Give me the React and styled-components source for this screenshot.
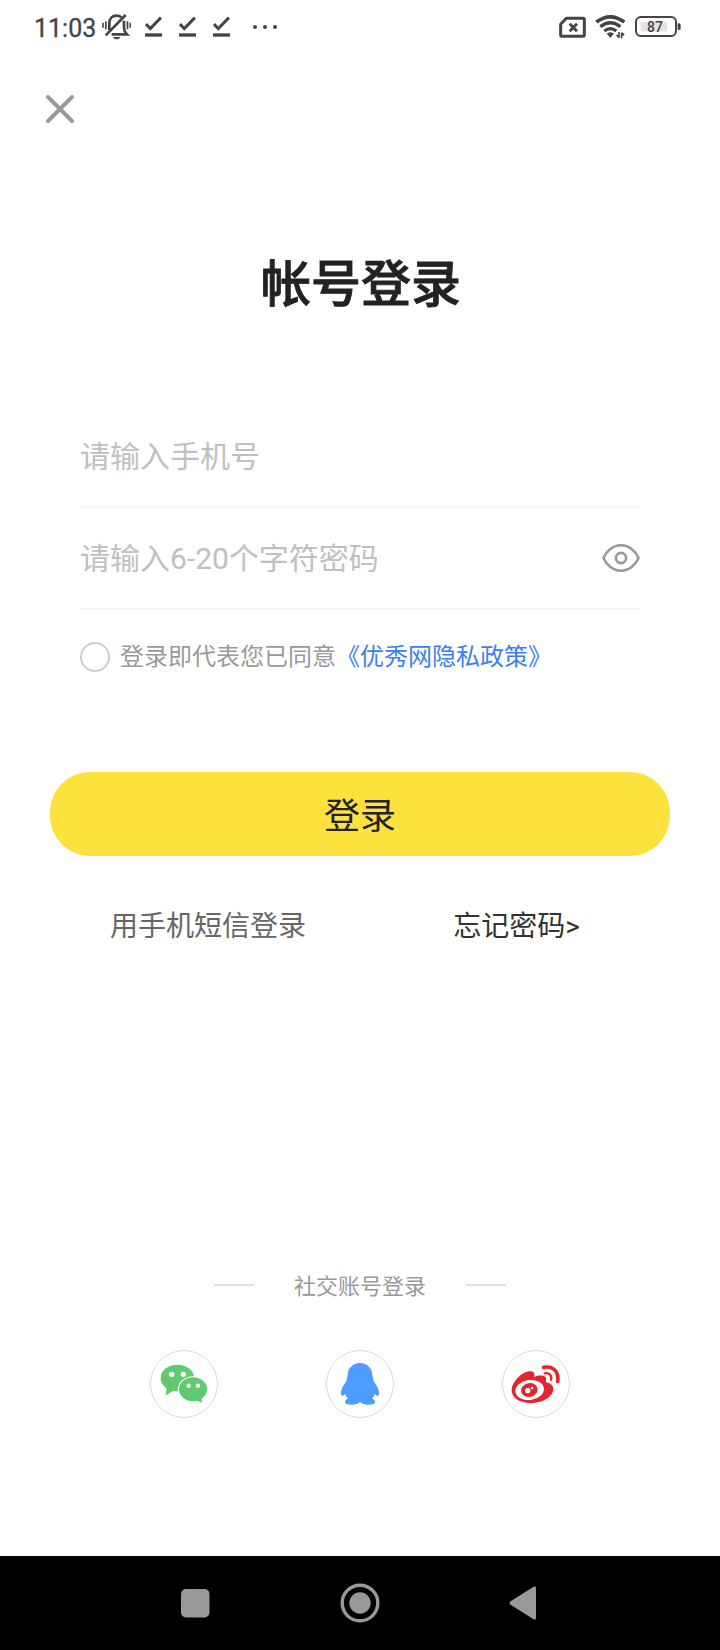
import React, { useState } from 'react';
import styled, { createGlobalStyle } from 'styled-components';

const GlobalStyle = createGlobalStyle`
  * {
    box-sizing: border-box;
  }

  body {
    margin: 0;
    background: #fff;
    font-family: Roboto, 'Noto Sans CJK SC', sans-serif;
  }

  button, input {
    font-family: inherit;
  }
`;

const Screen = styled.div`
  display: flex;
  flex-direction: column;
  width: 720px;
  height: 1650px;
  background: #fff;
`;

const StatusBar = styled.header`
  display: flex;
  align-items: center;
  justify-content: space-between;
  height: 54px;
  padding: 0 38px 0 34px;
  color: #444;
`;

const StatusGroup = styled.div`
  display: flex;
  align-items: center;
`;

const Clock = styled.span`
  width: 67px;
  font-size: 25px;
  line-height: 30px;
  margin-top: 4px;
  -webkit-text-stroke: 0.3px #444;
`;

const Checks = styled.div`
  display: flex;
  gap: 17px;
  margin: 0 22px 0 14px;
`;

const StatusIcon = styled.svg`
  display: block;
  flex: none;
  height: 30px;
  fill: none;
  stroke: #444;
`;

const Signals = styled(StatusGroup)`
  gap: 9px;
`;

const BatteryText = styled.text`
  font-size: 42px;
  font-weight: 500;
  fill: #444;
  stroke: none;
`;

const IconButton = styled.button`
  display: flex;
  padding: 0;
  border: none;
  background: none;
  cursor: pointer;
`;

const CloseButton = styled(IconButton)`
  align-self: flex-start;
  margin: 40px 0 0 45px;
`;

const Title = styled.h1`
  margin: 124px 0 0 2px;
  font-size: 50px;
  font-weight: 500;
  line-height: 74px;
  text-align: center;
  color: #222;
  -webkit-text-stroke: 0.8px #222;
`;

const Form = styled.form`
  display: flex;
  flex-direction: column;
  margin-top: 84px;
`;

const Field = styled.label`
  display: flex;
  align-items: center;
  height: 102px;
  margin: 0 80px;
  border-bottom: 2px solid #f4f4f4;
`;

const Input = styled.input`
  flex: 1;
  min-width: 0;
  height: 60px;
  padding: 0;
  border: none;
  outline: none;
  background: none;
  font-size: 30px;
  color: #222;

  &::placeholder {
    color: #c0c0c0;
    opacity: 1;
  }
`;

const Agreement = styled.div`
  display: flex;
  align-items: center;
  height: 36px;
  margin: 29px 80px 0;
  font-size: 24px;
  line-height: 36px;
  color: #999;
`;

const Radio = styled.button`
  width: 30px;
  height: 30px;
  margin-right: 10px;
  padding: 0;
  border: 2px solid #ccc;
  border-radius: 50%;
  background: ${props => (props.$checked ? '#fde23d' : '#fff')};
  cursor: pointer;
`;

const PolicyLink = styled.a`
  color: #3b7fee;
  text-decoration: none;
`;

const LoginButton = styled.button`
  height: 84px;
  margin: 97px 50px 0;
  padding: 0 0 3px;
  border: none;
  border-radius: 40px;
  background: #fde23d;
  font-size: 36px;
  color: #222;
  cursor: pointer;
`;

const Links = styled.div`
  display: flex;
  justify-content: space-between;
  margin: 50px 140px 0 110px;
`;

const TextLink = styled.a`
  font-size: 28px;
  line-height: 42px;
  color: ${props => (props.$dark ? '#333' : '#666')};
  text-decoration: none;
`;

const Social = styled.section`
  margin-top: auto;
  padding-bottom: 138px;
`;

const SocialTitle = styled.div`
  display: flex;
  align-items: center;
  justify-content: center;
  gap: 40px;
  font-size: 22px;
  line-height: 32px;
  color: #999;

  &::before,
  &::after {
    content: '';
    width: 40px;
    height: 2px;
    margin-bottom: 4px;
    background: #ddd;
  }
`;

const SocialList = styled.div`
  display: flex;
  justify-content: center;
  gap: 108px;
  margin-top: 47px;
`;

const NavBar = styled.nav`
  display: flex;
  align-items: center;
  justify-content: space-between;
  height: 94px;
  padding: 0 183px 0 181px;
  background: #000;
`;

const CheckIcon = () => (
  <StatusIcon width="17" viewBox="375 36 51 90">
    <path d="M378 72L391 86L423 53" strokeWidth="9" />
    <path d="M375 105H426" strokeWidth="10" />
  </StatusIcon>
);

const MutedBellIcon = () => (
  <StatusIcon width="30" viewBox="243 36 90 90" strokeWidth="8">
    <path d="M268 90V70C268 55 277 47 290 47C296 47 301 49 304 52" />
    <path d="M312 62V84C312 94 316 98 321 103H275" />
    <path d="M257 106L317 45" strokeWidth="8" />
    <path d="M279 111H301C299 116 295 118 290 118S281 116 279 111Z" fill="#444" stroke="none" />
    <path d="M249 68V83M257.5 64V88M322.5 64V88M331 68V83" strokeWidth="5" />
  </StatusIcon>
);

const MoreIcon = () => (
  <StatusIcon width="26" viewBox="696 36 78 90">
    <g fill="#444" stroke="none">
      <circle cx="705" cy="81" r="6" />
      <circle cx="735" cy="81" r="6" />
      <circle cx="765" cy="81" r="6" />
    </g>
  </StatusIcon>
);

const SimIcon = () => (
  <StatusIcon width="27" viewBox="54 36 81 90">
    <path
      d="M76 55H126Q130 55 130 59V105Q130 109 126 109H63Q59 109 59 105V73Z"
      strokeWidth="9"
      strokeLinejoin="round"
    />
    <path d="M86 71L108 94M108 71L86 94" strokeWidth="8.5" />
  </StatusIcon>
);

const WifiIcon = () => (
  <StatusIcon width="31" viewBox="162 36 93 90">
    <path d="M166 66Q208 35 250 66" strokeWidth="11" />
    <path d="M178 80Q208 57 238 80" strokeWidth="10" />
    <path d="M190 93Q208 79 226 93" strokeWidth="9" />
    <path d="M199 101Q208 95 217 101L208 112Z" fill="#444" stroke="#444" strokeWidth="3" strokeLinejoin="round" />
    <path d="M234 96V113M227 105L234 113M242 115V98M249 106L242 98" strokeWidth="5" />
  </StatusIcon>
);

const BatteryIcon = ({ level }) => (
  <StatusIcon width="47" viewBox="285 36 141 90">
    <rect x="302" y="66" width="79" height="28" fill="#e3e3e3" stroke="none" />
    <rect x="288" y="51" width="120" height="57" rx="14" strokeWidth="6" />
    <path d="M413 70V90Q422 90 422 86V74Q422 70 413 70Z" fill="#444" stroke="none" />
    <BatteryText x="345" y="96" textAnchor="middle">{level}</BatteryText>
  </StatusIcon>
);

const CloseIcon = () => (
  <svg width="30" height="30" viewBox="0 0 30 30" stroke="#999" strokeWidth="4" strokeLinecap="round">
    <path d="M3 3L27 27M27 3L3 27" />
  </svg>
);

const EyeIcon = () => (
  <svg width="38" height="30" viewBox="0 0 38 30" fill="none" stroke="#999" strokeWidth="2.6">
    <path d="M1.4 15C4.5 8 11 2.3 19 2.3S33.5 8 36.6 15C33.5 22 27 27.7 19 27.7S4.5 22 1.4 15Z" strokeLinejoin="round" />
    <circle cx="19" cy="15" r="5.1" />
  </svg>
);

const SocialIcon = ({ label, children }) => (
  <IconButton type="button" aria-label={label}>
    <svg width="68" height="68" viewBox="0 0 204 204">
      <circle cx="102" cy="102" r="100.5" fill="#fff" stroke="#ddd" strokeWidth="3" />
      {children}
    </svg>
  </IconButton>
);

const WechatLogo = () => (
  <>
    <g fill="#5fca6e">
      <ellipse cx="82" cy="84" rx="50" ry="40" />
      <path d="M50 110L48 136L72 121Z" />
    </g>
    <ellipse cx="129" cy="118" rx="46" ry="39" fill="#fff" />
    <g fill="#5fca6e">
      <ellipse cx="129" cy="118" rx="42" ry="36" />
      <path d="M138 151L156 158L153 140Z" />
    </g>
    <g fill="#fff">
      <circle cx="65" cy="73" r="8" />
      <circle cx="100" cy="73" r="8" />
      <circle cx="116" cy="107" r="6.5" />
      <circle cx="144" cy="107" r="6.5" />
    </g>
  </>
);

const QQLogo = () => (
  <path
    fill="#4c9dff"
    d="M102 39C79 39 65 56 65 76C65 81 62 83 62 88C62 93 60 96 57 100C49 110 45 120 45 128C45 134 47 138 49 138C52 138 55 134 58 131C59 137 62 142 66 146C60 147 57 151 57 155C57 162 65 164 77 164C89 164 97 161 102 156C107 161 115 164 127 164C139 164 147 162 147 155C147 151 144 147 138 146C142 142 145 137 146 131C149 134 152 138 155 138C157 138 159 134 159 128C159 120 155 110 147 100C144 96 142 93 142 88C142 83 139 81 139 76C139 56 125 39 102 39Z"
  />
);

const WeiboLogo = () => (
  <>
    <path
      fill="#e2262f"
      d="M29 121C29 97 58 66 82 64C94 63 100 69 96 81C109 76 123 75 130 81C134 85 133 90 131 96C144 99 154 105 154 117C154 138 125 159 86 159C53 159 29 145 29 121Z"
    />
    <ellipse cx="83" cy="120" rx="43" ry="30" fill="#fff" transform="rotate(-7 83 120)" />
    <ellipse cx="82" cy="120" rx="25" ry="21" fill="#e2262f" transform="rotate(-12 82 120)" />
    <circle cx="77" cy="122" r="8" fill="#fff" />
    <circle cx="90" cy="114" r="4" fill="#fff" />
    <g fill="none" stroke="#e2262f" strokeLinecap="round">
      <path d="M125 52C152 47 172 64 167 94" strokeWidth="11" />
      <path d="M128 70C142 67 150 76 147 89" strokeWidth="7" />
    </g>
  </>
);

const App = () => {
  const [phone, setPhone] = useState('');
  const [password, setPassword] = useState('');
  const [showPassword, setShowPassword] = useState(false);
  const [agreed, setAgreed] = useState(false);

  const handleSubmit = (e) => {
    e.preventDefault();
  };

  return (
    <>
      <GlobalStyle />
      <Screen>
        <StatusBar>
          <StatusGroup>
            <Clock>11:03</Clock>
            <MutedBellIcon />
            <Checks>
              <CheckIcon />
              <CheckIcon />
              <CheckIcon />
            </Checks>
            <MoreIcon />
          </StatusGroup>
          <Signals>
            <SimIcon />
            <WifiIcon />
            <BatteryIcon level={87} />
          </Signals>
        </StatusBar>

        <CloseButton type="button" aria-label="关闭">
          <CloseIcon />
        </CloseButton>

        <Title>帐号登录</Title>

        <Form onSubmit={handleSubmit}>
          <Field>
            <Input
              type="tel"
              placeholder="请输入手机号"
              value={phone}
              onChange={(e) => setPhone(e.target.value)}
            />
          </Field>
          <Field>
            <Input
              type={showPassword ? 'text' : 'password'}
              placeholder="请输入6-20个字符密码"
              value={password}
              onChange={(e) => setPassword(e.target.value)}
            />
            <IconButton type="button" onClick={() => setShowPassword(!showPassword)}>
              <EyeIcon />
            </IconButton>
          </Field>
          <Agreement>
            <Radio type="button" $checked={agreed} onClick={() => setAgreed(!agreed)} />
            登录即代表您已同意
            <PolicyLink href="#">《优秀网隐私政策》</PolicyLink>
          </Agreement>
          <LoginButton type="submit">登录</LoginButton>
        </Form>

        <Links>
          <TextLink href="#">用手机短信登录</TextLink>
          <TextLink href="#" $dark>忘记密码&gt;</TextLink>
        </Links>

        <Social>
          <SocialTitle>社交账号登录</SocialTitle>
          <SocialList>
            <SocialIcon label="微信">
              <WechatLogo />
            </SocialIcon>
            <SocialIcon label="QQ">
              <QQLogo />
            </SocialIcon>
            <SocialIcon label="微博">
              <WeiboLogo />
            </SocialIcon>
          </SocialList>
        </Social>

        <NavBar>
          <svg width="29" height="29" viewBox="0 0 29 29" fill="#999">
            <rect x="0" y="0" width="28.5" height="28.5" rx="5" />
          </svg>
          <svg width="40" height="40" viewBox="0 0 40 40">
            <circle cx="20" cy="20" r="17.8" fill="none" stroke="#999" strokeWidth="3.4" />
            <circle cx="20" cy="20" r="10.7" fill="#999" />
          </svg>
          <svg width="28" height="34" viewBox="0 0 28 34" fill="#999">
            <path d="M1.2 15.6L24.6 0.7Q27 -0.2 27 2V32Q27 34.2 24.6 33.3L1.2 18.4Q0 17 1.2 15.6Z" />
          </svg>
        </NavBar>
      </Screen>
    </>
  );
};

export default App;
